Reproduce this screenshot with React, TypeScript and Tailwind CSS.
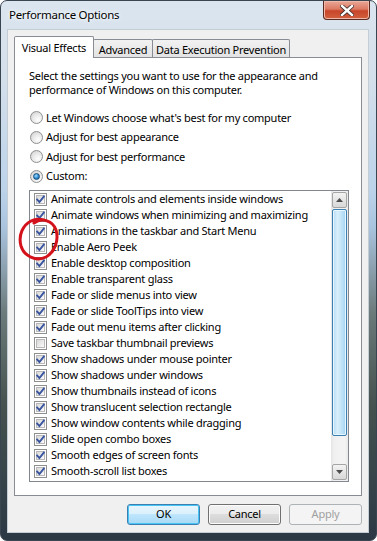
const effects: [string, boolean][] = [
  ["Animate controls and elements inside windows", true],
  ["Animate windows when minimizing and maximizing", true],
  ["Animations in the taskbar and Start Menu", true],
  ["Enable Aero Peek", true],
  ["Enable desktop composition", true],
  ["Enable transparent glass", true],
  ["Fade or slide menus into view", true],
  ["Fade or slide ToolTips into view", true],
  ["Fade out menu items after clicking", true],
  ["Save taskbar thumbnail previews", false],
  ["Show shadows under mouse pointer", true],
  ["Show shadows under windows", true],
  ["Show thumbnails instead of icons", true],
  ["Show translucent selection rectangle", true],
  ["Show window contents while dragging", true],
  ["Slide open combo boxes", true],
  ["Smooth edges of screen fonts", true],
  ["Smooth-scroll list boxes", true],
];

const radios = [
  "Let Windows choose what's best for my computer",
  "Adjust for best appearance",
  "Adjust for best performance",
  "Custom:",
];

function Radio({ on }: { on: boolean }) {
  return (
    <span className="flex h-[13px] w-[13px] shrink-0 items-center justify-center rounded-full border border-[#8e8f8f] bg-[radial-gradient(circle_at_65%_70%,#ffffff_0%,#e6e6e6_55%,#c9c9c9_100%)]">
      {on && (
        <span className="h-[7px] w-[7px] rounded-full border border-[#1a4c7c] bg-[radial-gradient(circle_at_40%_35%,#9fe0ff_0%,#2c8ad0_55%,#0d4f8c_100%)]" />
      )}
    </span>
  );
}

function Check({ on }: { on: boolean }) {
  return (
    <span className="flex h-[13px] w-[13px] shrink-0 items-center justify-center border border-[#8e8f8f] bg-white">
      <span className="relative flex h-[9px] w-[9px] items-center justify-center border border-[#b9b9b9] bg-linear-to-br from-[#d9d9d9] to-[#fafafa]">
        {on && (
          <svg width="11" height="11" viewBox="0 0 11 11" className="absolute -left-[2px] -top-[2px]">
            <path d="M2.2 5.6 L4.4 8 L8.8 2.6" fill="none" stroke="#3a55a0" strokeWidth="1.9" strokeLinecap="square" />
          </svg>
        )}
      </span>
    </span>
  );
}

function Arrow({ up }: { up: boolean }) {
  return (
    <svg width="7" height="4" viewBox="0 0 7 4">
      <path d={up ? "M0 4 L3.5 0 L7 4 Z" : "M0 0 L3.5 4 L7 0 Z"} fill="#4d4d4d" />
    </svg>
  );
}

function Button({ label, primary, disabled }: { label: string; primary?: boolean; disabled?: boolean }) {
  return (
    <div
      className={
        "flex h-[21px] w-[73px] items-center justify-center rounded-[3px] border " +
        (disabled
          ? "border-[#adb2b5] bg-[#f4f4f4] text-[#a0a0a0]"
          : primary
            ? "border-[#3c7fb1] bg-[linear-gradient(to_bottom,#eaf6fd_0%,#d9f0fc_50%,#bee6fd_50%,#a7d9f5_100%)] text-black shadow-[inset_0_0_0_1px_#48c4f5]"
            : "border-[#707070] bg-[linear-gradient(to_bottom,#f2f2f2_0%,#ebebeb_50%,#dddddd_50%,#cfcfcf_100%)] text-black shadow-[inset_0_0_0_1px_#fcfcfc]")
      }
    >
      {label}
    </div>
  );
}

export default function App() {
  return (
    <div className="relative h-[541px] w-[377px] overflow-hidden bg-white font-['Noto_Sans',sans-serif] text-[11px] tracking-[-0.25px] text-black">
      <div className="flex h-[541px] w-[377px] flex-col rounded-[7px] border border-[#3a4552] bg-[linear-gradient(to_bottom,#dbe5ef_0%,#d3dfeb_15%,#bcd3ea_35%,#aac4df_42%,#6b7a7a_58%,#45524f_75%,#2c3945_100%)]">
        {/* title bar */}
        <div className="flex h-[29px] shrink-0 items-start">
          <span className="mt-[6px] pl-[8px] text-[11.5px] leading-[16px] tracking-[-0.3px] [text-shadow:0_0_6px_#ffffff,0_0_3px_#ffffff]">
            Performance Options
          </span>
          <div className="ml-auto mr-[6px] flex h-[19px] w-[47px] items-center justify-center rounded-b-[4px] border border-t-0 border-[#5a2a20] bg-[linear-gradient(to_bottom,#e9a898_0%,#dc7a62_45%,#c8452a_55%,#d2613f_100%)] shadow-[inset_0_0_0_1px_#f0b8a8]">
            <svg width="14" height="11" viewBox="0 0 14 11">
              <path d="M2 1 L12 10 M12 1 L2 10" stroke="#3d2a28" strokeWidth="4" strokeLinecap="square" />
              <path d="M2 1 L12 10 M12 1 L2 10" stroke="#ffffff" strokeWidth="2.4" strokeLinecap="square" />
            </svg>
          </div>
        </div>

        {/* client */}
        <div className="ml-[7px] flex h-[502px] w-[360px] flex-col bg-[#f0f0f0] shadow-[0_0_0_1px_#c4ccd4]">
          {/* tabs */}
          <div className="ml-[6px] mt-[6px] flex h-[21px] items-end">
            <div className="relative z-10 -mb-px flex h-[22px] w-[80px] items-start justify-center rounded-t-[2px] border border-b-0 border-[#898c95] bg-white pt-[3px] leading-[15px]">
              Visual Effects
            </div>
            <div className="-ml-px flex h-[18px] w-[60px] items-center justify-center rounded-t-[2px] border border-b-0 border-[#898c95] bg-linear-to-b from-[#f2f2f2] to-[#e3e3e3] pt-px leading-[15px]">
              Advanced
            </div>
            <div className="-ml-px flex h-[18px] w-[138px] items-center justify-center whitespace-nowrap rounded-t-[2px] border border-b-0 border-[#898c95] bg-linear-to-b from-[#f2f2f2] to-[#e3e3e3] pt-px leading-[15px]">
              Data Execution Prevention
            </div>
          </div>

          {/* tab panel */}
          <div className="mx-[6px] flex h-[439px] w-[348px] flex-col border border-[#898c95] bg-white pl-[14px] pt-[11px]">
            <p className="whitespace-nowrap leading-[14px]">
              Select the settings you want to use for the appearance and
              <br />
              performance of Windows on this computer.
            </p>
            <div className="mt-[11px] flex flex-col">
              {radios.map((r, i) => (
                <div key={r} className="flex h-[19.5px] items-center gap-[3px] pl-px">
                  <Radio on={i === 3} />
                  <span className="leading-[16px]">{r}</span>
                </div>
              ))}
            </div>

            {/* list box */}
            <div className="mt-[4px] flex h-[292px] w-[320px] border border-[#828790]">
              <div className="flex flex-1 flex-col">
                {effects.map(([label, on]) => (
                  <div key={label} className="flex h-[16px] items-center gap-[4px] pl-[4px]">
                    <Check on={on} />
                    <span className="whitespace-nowrap leading-[16px]">{label}</span>
                  </div>
                ))}
              </div>
              <div className="flex w-[17px] flex-col bg-[linear-gradient(to_right,#e5e5e5_0%,#f0f0f0_20%,#f4f4f4_80%,#e8e8e8_100%)]">
                <div className="ml-px mt-px flex h-[16px] w-[15px] items-center justify-center rounded-[2px] border border-[#a5a5a5] bg-linear-to-b from-[#f3f3f3] to-[#d8d8d8]">
                  <Arrow up />
                </div>
                <div className="ml-px mt-px h-[227px] w-[15px] rounded-[2px] border border-[#3c7fb1] bg-[linear-gradient(to_right,#b3dcf6_0%,#d8eefb_35%,#c5e6f9_60%,#a3d3f3_100%)] shadow-[inset_0_0_0_1px_#e8f6fd]" />
                <div className="flex-1" />
                <div className="mb-px ml-px flex h-[16px] w-[15px] items-center justify-center rounded-[2px] border border-[#a5a5a5] bg-linear-to-b from-[#f3f3f3] to-[#d8d8d8]">
                  <Arrow up={false} />
                </div>
              </div>
            </div>
          </div>

          {/* buttons */}
          <div className="mx-[6px] mt-[8px] flex justify-end gap-[8px]">
            <Button label="OK" primary />
            <Button label="Cancel" />
            <Button label="Apply" disabled />
          </div>
        </div>
      </div>

      {/* red annotation circle */}
      <svg className="pointer-events-none absolute left-0 top-0" width="80" height="280" viewBox="0 0 80 280">
        <path
          d="M34 223 C42 217 53 221 56 230 C59 240 55 252 46 257 C36 262 24 256 21 246 C18 235 23 225 31 221 C35 219 40 219 44 220"
          fill="none"
          stroke="#d4121c"
          strokeWidth="3"
          strokeLinecap="round"
        />
      </svg>
    </div>
  );
}
